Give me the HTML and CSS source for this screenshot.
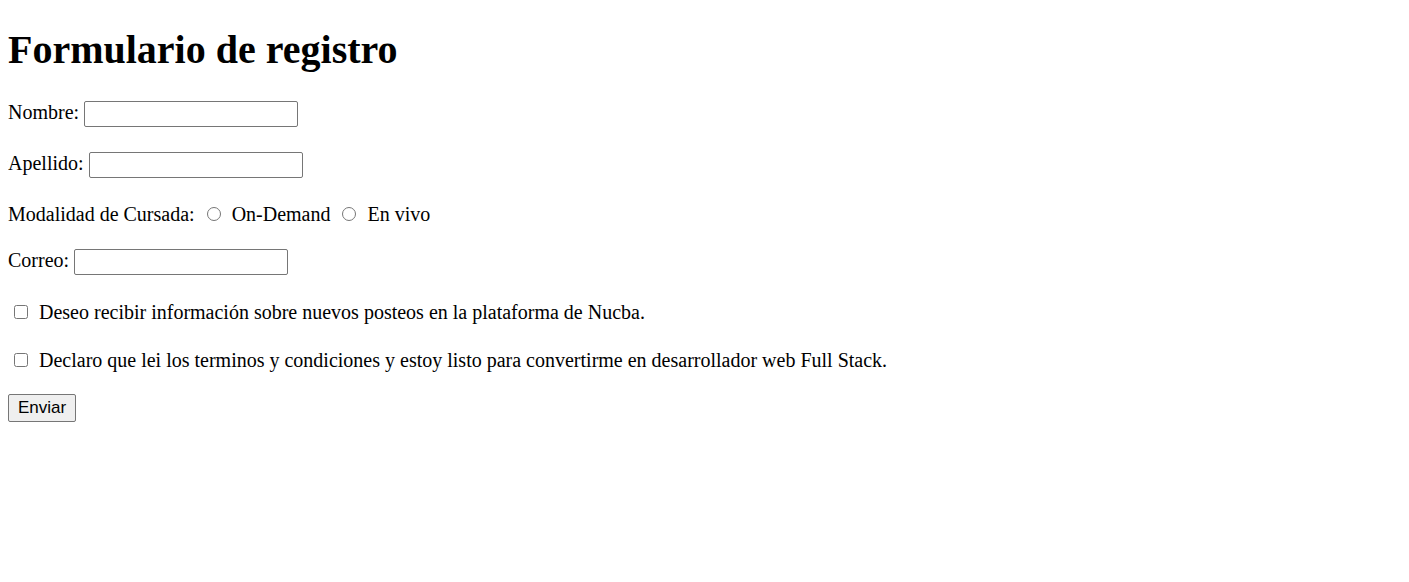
FILE: index.html
```html
<!DOCTYPE html>
<html lang="es">
<head>
<meta charset="utf-8">
<title>Formulario de registro</title>
<link rel="stylesheet" href="styles.css">
</head>
<body>
<h1 class="title">Formulario de registro</h1>
<form class="form">
  <p class="row"><label for="nombre">Nombre:</label> <input class="text-input" type="text" id="nombre"></p>
  <p class="row"><label for="apellido">Apellido:</label> <input class="text-input" type="text" id="apellido"></p>
  <p class="row radio-row">Modalidad de Cursada: <input class="radio" type="radio" name="modalidad" id="ondemand"> <label for="ondemand">On-Demand</label> <input class="radio" type="radio" name="modalidad" id="envivo"> <label for="envivo">En vivo</label></p>
  <p class="row mail-row"><label for="correo">Correo:</label> <input class="text-input" type="email" id="correo"></p>
  <p class="row check-row"><input class="check" type="checkbox" id="info"> <label for="info">Deseo recibir información sobre nuevos posteos en la plataforma de Nucba.</label></p>
  <p class="row check-row last-row"><input class="check" type="checkbox" id="terminos"> <label for="terminos">Declaro que lei los terminos y condiciones y estoy listo para convertirme en desarrollador web Full Stack.</label></p>
  <button class="submit" type="submit">Enviar</button>
</form>
</body>
</html>
```
FILE: styles.css
```css
body {
  margin: 8px;
  font-family: "Liberation Serif", "Times New Roman", serif;
  font-size: 20px;
  color: #000;
  background: #fff;
}
.title {
  font-size: 40px;
  font-weight: bold;
  margin: 18px 0 28px;
}
.form {
  margin: 0;
}
.row {
  margin: 25px 0;
}
.radio-row {
  margin-bottom: 23px;
}
.mail-row {
  margin-top: 23px;
  margin-bottom: 26px;
}
.last-row {
  margin-bottom: 22px;
}
.text-input {
  width: 208px;
  height: 22px;
  box-sizing: content-box;
  padding: 1px 2px;
  border: 1px solid #767676;
  border-radius: 2px;
  font: 16px Arial, "Liberation Sans", sans-serif;
  vertical-align: baseline;
}
.radio {
  width: 14px;
  height: 14px;
  margin: 3px 6px 1px 7px;
}
.check {
  width: 14px;
  height: 14px;
  margin: 3px 6px 1px 6px;
}
.submit {
  font: 17px "Liberation Sans", Arial, sans-serif;
  padding: 3px 9px;
  height: 28px;
  border: 1px solid #767676;
  border-radius: 2px;
  background: #efefef;
  color: #000;
}
```
